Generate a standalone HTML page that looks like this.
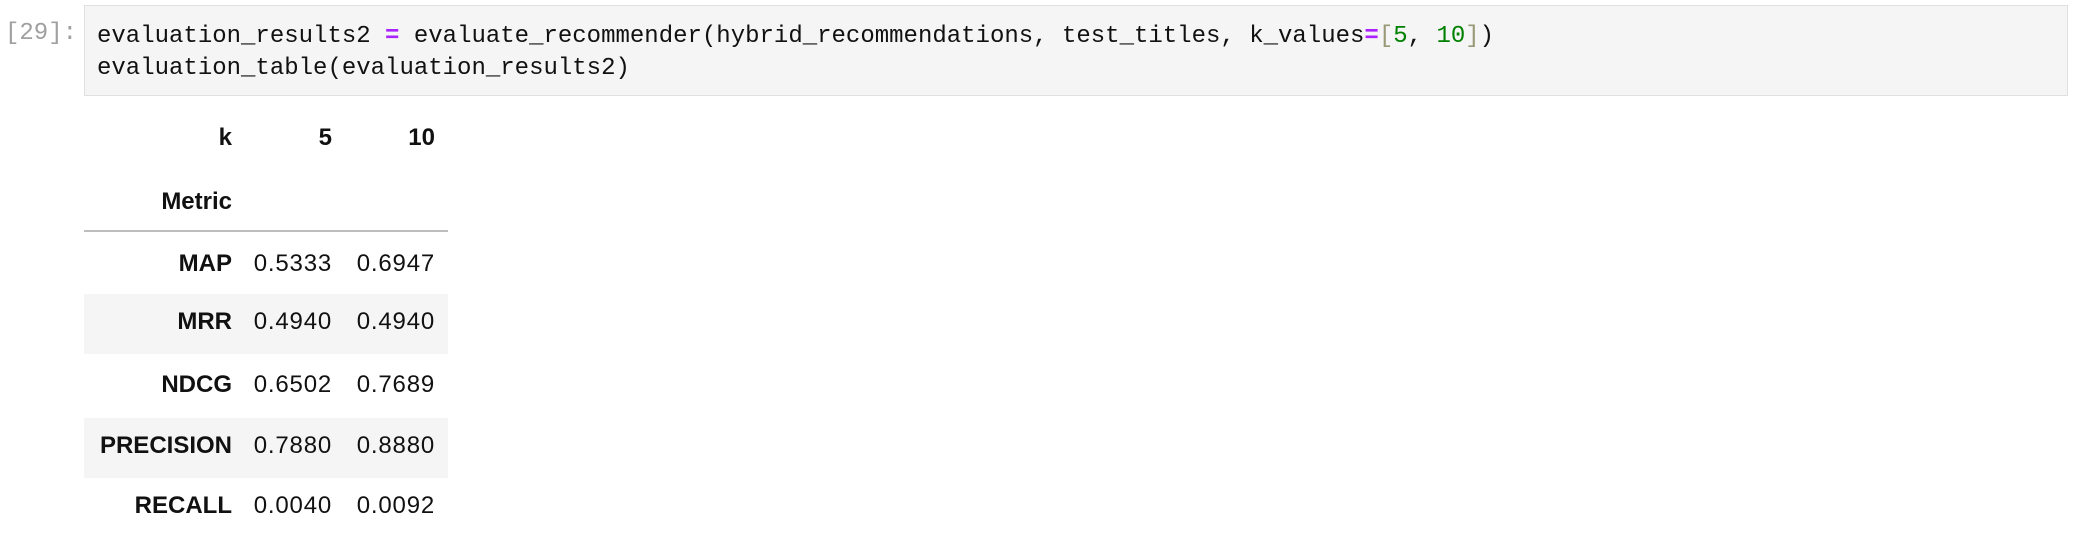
<!DOCTYPE html>
<html><head><meta charset="utf-8"><style>
body{margin:0;width:2081px;height:554px;background:#fff;position:relative;overflow:hidden;font-family:"Liberation Sans",sans-serif}
.prompt{position:absolute;left:5px;top:18px;font:24px/32px "Liberation Mono",monospace;color:#a0a0a0}
.code{position:absolute;left:84px;top:5px;width:1984px;height:91px;background:#f5f5f5;border:1px solid #e0e0e0;box-sizing:border-box}
.code pre{margin:0;position:absolute;left:12px;top:15px;font:24px/32px "Liberation Mono",monospace;color:#111;letter-spacing:0px}
.op{color:#aa22ff;font-weight:bold}.n{color:#008000}.b{color:#999977}
.t{position:absolute;font-size:24px;color:#111;text-align:right;line-height:30px;letter-spacing:0.8px}
.bold{font-weight:bold;letter-spacing:0}
.stripe{position:absolute;left:84px;width:364px;height:60px;background:#f5f5f5}
.rule{position:absolute;left:84px;width:364px;top:230px;height:2px;background:#bdbdbd}
</style></head><body>
<div class="prompt">[29]:</div>
<div class="code"><pre>evaluation_results2 <span class="op">=</span> evaluate_recommender(hybrid_recommendations, test_titles, k_values<span class="op">=</span><span class="b">[</span><span class="n">5</span>, <span class="n">10</span><span class="b">]</span>)
evaluation_table(evaluation_results2)</pre></div>
<div class="stripe" style="top:294px"></div>
<div class="stripe" style="top:418px"></div>
<div class="rule"></div>
<div class="t bold" style="right:1849px;top:123px">k</div>
<div class="t bold" style="right:1749px;top:123px">5</div>
<div class="t bold" style="right:1646px;top:123px">10</div>
<div class="t bold" style="right:1849px;top:187px">Metric</div>

<div class="t bold" style="right:1849px;top:249px">MAP</div>
<div class="t" style="right:1749px;top:249px">0.5333</div>
<div class="t" style="right:1646px;top:249px">0.6947</div>

<div class="t bold" style="right:1849px;top:307px">MRR</div>
<div class="t" style="right:1749px;top:307px">0.4940</div>
<div class="t" style="right:1646px;top:307px">0.4940</div>

<div class="t bold" style="right:1849px;top:370px">NDCG</div>
<div class="t" style="right:1749px;top:370px">0.6502</div>
<div class="t" style="right:1646px;top:370px">0.7689</div>

<div class="t bold" style="right:1849px;top:431px">PRECISION</div>
<div class="t" style="right:1749px;top:431px">0.7880</div>
<div class="t" style="right:1646px;top:431px">0.8880</div>

<div class="t bold" style="right:1849px;top:491px">RECALL</div>
<div class="t" style="right:1749px;top:491px">0.0040</div>
<div class="t" style="right:1646px;top:491px">0.0092</div>
</body></html>
